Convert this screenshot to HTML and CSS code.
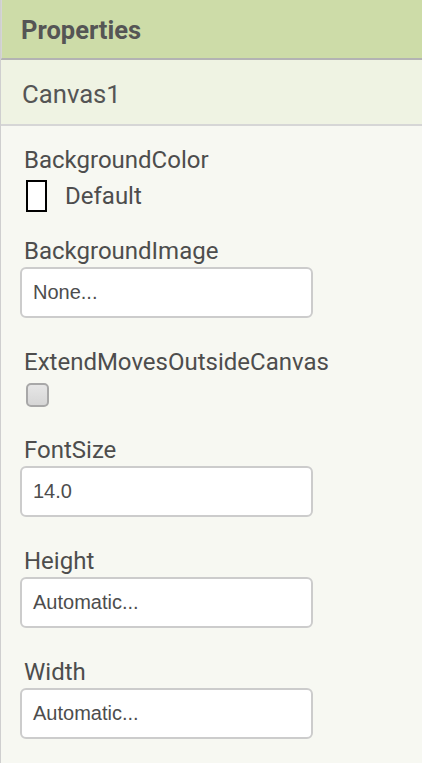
FILE: index.html
```html
<!DOCTYPE html>
<html>
<head>
<meta charset="utf-8">
<link rel="stylesheet" href="styles.css">
</head>
<body>
<div class="panel">
  <div class="header">Properties</div>
  <div class="component">Canvas1</div>
  <div class="props">
    <div class="prop prop-color">
      <div class="label">BackgroundColor</div>
      <div class="color-row">
        <span class="swatch"></span>
        <span class="color-name">Default</span>
      </div>
    </div>
    <div class="prop">
      <div class="label">BackgroundImage</div>
      <div class="input">None...</div>
    </div>
    <div class="prop prop-check">
      <div class="label">ExtendMovesOutsideCanvas</div>
      <span class="checkbox"></span>
    </div>
    <div class="prop">
      <div class="label">FontSize</div>
      <div class="input">14.0</div>
    </div>
    <div class="prop">
      <div class="label">Height</div>
      <div class="input">Automatic...</div>
    </div>
    <div class="prop">
      <div class="label">Width</div>
      <div class="input">Automatic...</div>
    </div>
  </div>
</div>
</body>
</html>
```
FILE: styles.css
```css
html, body {
  margin: 0;
  padding: 0;
  background: #f7f8f2;
}
body {
  font-family: Roboto, "Liberation Sans", sans-serif;
  color: #4d4d4d;
}
.panel {
  width: 422px;
  height: 763px;
  background: #f7f8f2;
  border-left: 1px solid #cfcfcf;
  box-sizing: border-box;
  overflow: hidden;
}
.header {
  height: 60px;
  box-sizing: border-box;
  background: #cddca8;
  border-left: 2px solid #d5d5d5;
  margin-left: -1px;
  border-bottom: 2px solid #b3b3b3;
  padding-left: 19px;
  padding-top: 2px;
  font-weight: bold;
  font-size: 25.5px;
  line-height: 56px;
  color: #555;
}
.component {
  height: 66px;
  box-sizing: border-box;
  background: #eff3e3;
  border-bottom: 2px solid #d6d6d6;
  padding-left: 21px;
  padding-top: 4px;
  font-size: 25.7px;
  line-height: 60px;
  color: #555;
}
.props {
  padding: 21px 0 0 19px;
  display: flex;
  flex-direction: column;
}
.prop {
  display: flex;
  flex-direction: column;
  align-items: flex-start;
  padding-bottom: 31px;
}
.prop-color {
  padding-bottom: 26px;
}
.prop-check {
  padding-bottom: 30px;
}
.label {
  font-size: 24px;
  line-height: 24px;
  height: 24px;
  padding-left: 4px;
  padding-top: 1px;
  margin-bottom: 4px;
  color: #4d4d4d;
}
.color-row {
  display: flex;
  align-items: center;
  margin-top: 4px;
  padding-left: 6px;
}
.swatch {
  width: 21px;
  height: 32px;
  box-sizing: border-box;
  border: 2px solid #000;
  background: #fff;
}
.color-name {
  font-size: 24px;
  margin-left: 18px;
  color: #4d4d4d;
}
.checkbox {
  margin-top: 5px;
  margin-left: 6px;
  width: 23px;
  height: 24px;
  box-sizing: border-box;
  border: 2px solid #a8a8a8;
  border-radius: 5px;
  background: linear-gradient(#e6e6e6, #d6d6d6);
}
.input {
  width: 293px;
  height: 51px;
  box-sizing: border-box;
  border: 2px solid #cccccc;
  border-radius: 6px;
  background: #fff;
  padding-left: 11px;
  font-family: "Liberation Sans", Arial, sans-serif;
  font-size: 20px;
  line-height: 47px;
  color: #4d4d4d;
}
```
